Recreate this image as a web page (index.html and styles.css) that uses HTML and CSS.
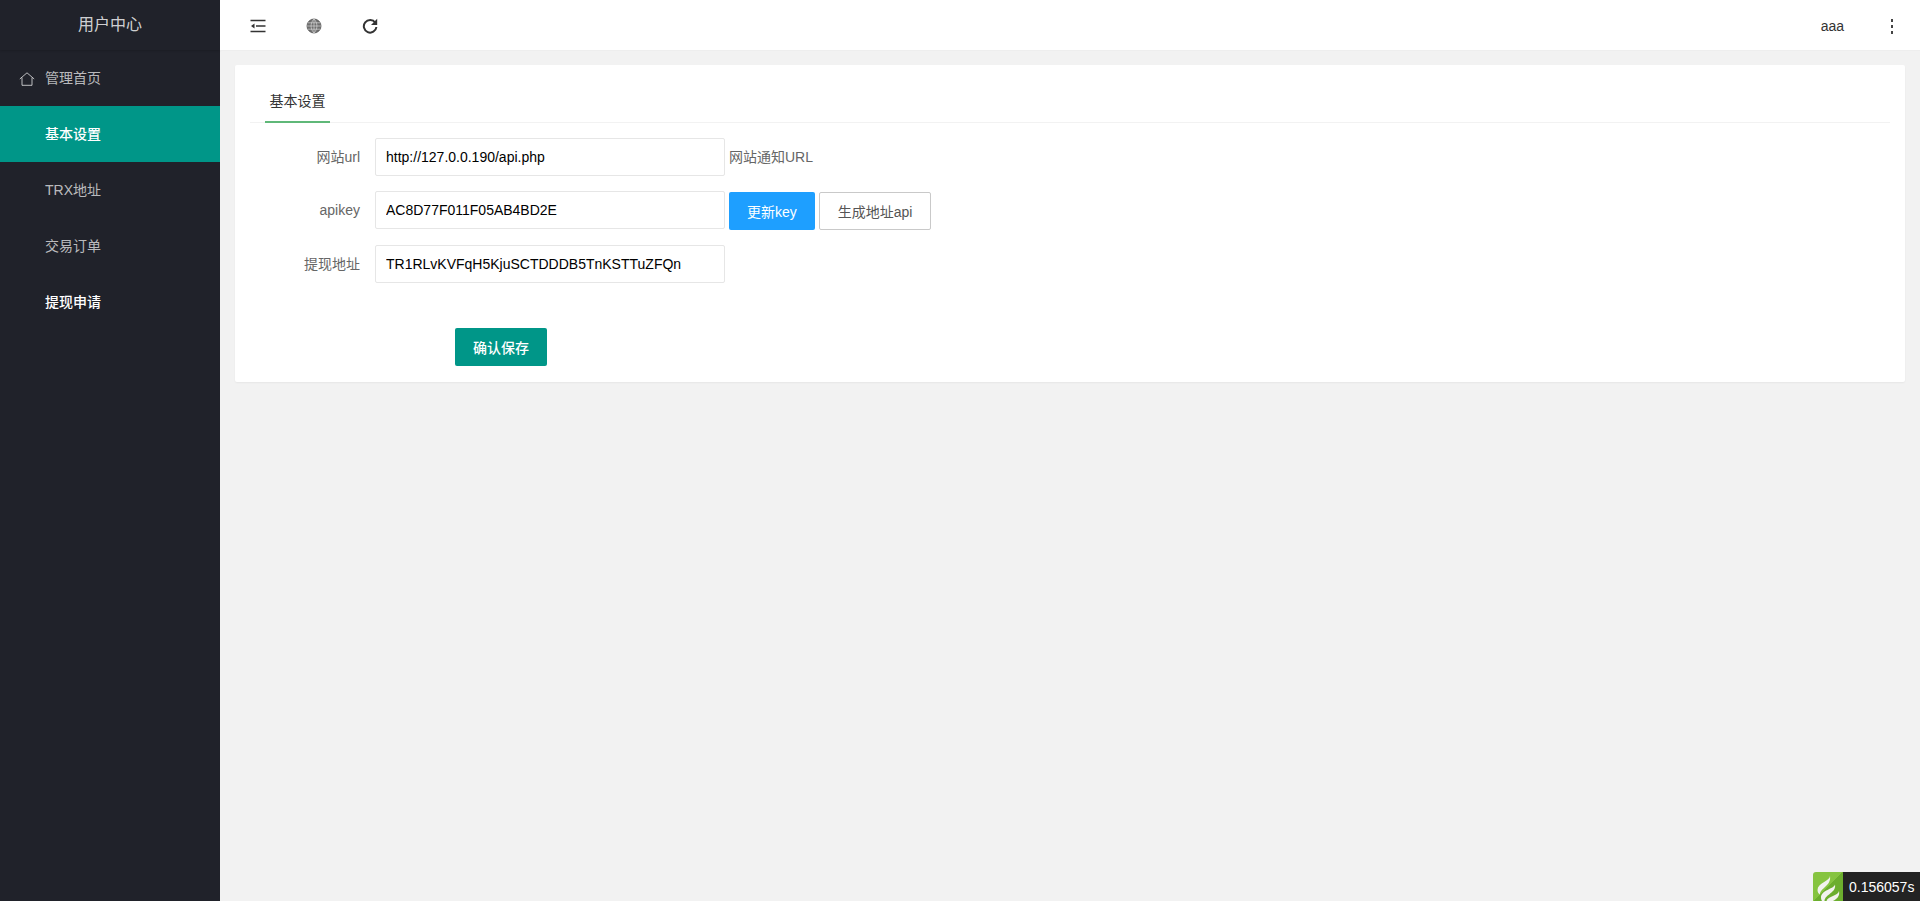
FILE: index.html
```html
<!DOCTYPE html>
<html lang="zh-CN">
<head>
<meta charset="utf-8">
<title>用户中心</title>
<link rel="stylesheet" href="styles.css">
</head>
<body>
<div class="app">
  <aside class="side">
    <div class="logo">用户中心</div>
    <nav class="menu">
      <a class="item"><svg class="home" viewBox="0 0 16 14" width="16" height="14"><path d="M.8 7 8 .8 15.2 7M3 5.6v7.7h10V5.600" fill="none" stroke="currentColor" stroke-width="1"/></svg>管理首页</a>
      <a class="item active">基本设置</a>
      <a class="item">TRX地址</a>
      <a class="item">交易订单</a>
      <a class="item hover">提现申请</a>
    </nav>
  </aside>
  <div class="main">
    <header class="top">
      <div class="tools">
        <span class="tool"><svg viewBox="0 0 16 16" width="16" height="16"><path d="M.5 2.500h15M6 8h9.500M.5 13.500h15" stroke="#333" stroke-width="1.500" fill="none"/><path d="M1 8 4.500 5.600v4.800z" fill="#333"/></svg></span>
        <span class="tool"><svg viewBox="0 0 16 16" width="16" height="16"><circle cx="8" cy="8" r="7" fill="#6e6e6e" stroke="#555" stroke-width=".8"/><path d="M1 8h14M2 4.800h12M2 11.200h12M8 1v14M8 1c-3.900 3.900-3.900 10.100 0 14M8 1c3.900 3.900 3.900 10.100 0 14" fill="none" stroke="#e4e4e4" stroke-width=".6"/></svg></span>
        <span class="tool"><svg viewBox="0 0 16 16" width="16" height="16"><path d="M13.300 4.700A6.300 6.300 0 1 0 14.400 9" fill="none" stroke="#333" stroke-width="2"/><path d="M15.200 .8v6.200H9z" fill="#333"/></svg></span>
      </div>
      <div class="user">
        <span class="name">aaa</span>
        <span class="dots"><i></i><i></i><i></i></span>
      </div>
    </header>
    <main class="content">
      <section class="card">
        <div class="tabs"><span class="tab">基本设置</span></div>
        <form class="form">
          <div class="row">
            <label class="label">网站url</label>
            <input class="input" type="text" value="http://127.0.0.190/api.php">
            <span class="help">网站通知URL</span>
          </div>
          <div class="row">
            <label class="label">apikey</label>
            <input class="input" type="text" value="AC8D77F011F05AB4BD2E">
            <button class="btn blue" type="button">更新key</button>
            <button class="btn plain" type="button">生成地址api</button>
          </div>
          <div class="row">
            <label class="label">提现地址</label>
            <input class="input" type="text" value="TR1RLvKVFqH5KjuSCTDDDB5TnKSTTuZFQn">
          </div>
          <div class="actions"><button class="btn green" type="button">确认保存</button></div>
        </form>
      </section>
    </main>
  </div>
</div>
<div class="trace">
  <span class="trace-logo"><svg viewBox="0 0 30 29" width="30" height="29"><path d="M17 4C17 9 4.500 11 4.500 18c0 2 1 3.500 2.500 4.500C7 16 18.500 14 17 4z" fill="#f2f2ee"/><path d="M22 12.500C21 17 8 18 8 25.500c0 1.500.5 2.500 1 3.500h2.500C12 22 23.500 21 22 12.500z" fill="#f2f2ee"/><path d="M26 19c-1 5-11 5-12.500 10H20c4-2 7-5 6-10z" fill="#f2f2ee"/></svg></span>
  <span class="trace-time">0.156057s</span>
</div>
</body>
</html>
```
FILE: styles.css
```css
* { box-sizing: border-box; }
html, body { margin: 0; height: 100%; overflow: hidden; }
body {
  font: 14px/24px "Liberation Sans", "Noto Sans CJK SC", sans-serif;
  color: #333;
  background: #f2f2f2;
}
.app { display: flex; height: 100vh; }

.side { width: 220px; flex: none; background: #20222a; }
.logo {
  height: 50px;
  line-height: 50px;
  text-align: center;
  font-size: 16px;
  color: rgba(255,255,255,.8);
  box-shadow: 0 1px 2px rgba(0,0,0,.15);
}
.menu { display: flex; flex-direction: column; }
.item {
  position: relative;
  height: 56px;
  line-height: 56px;
  padding-left: 45px;
  color: rgba(255,255,255,.7);
}
.home { position: absolute; left: 19px; top: 22px; color: rgba(255,255,255,.7); }
.item.active { background: #009688; color: #fff; font-weight: 500; }
.item.hover { color: #fff; font-weight: 500; }

.main { flex: 1; display: flex; flex-direction: column; min-width: 0; }
.top {
  height: 51px;
  flex: none;
  background: #fff;
  border-bottom: 1px solid #eee;
  display: flex;
  justify-content: space-between;
  align-items: center;
  padding: 0 26px 0 10px;
}
.tools { display: flex; padding-top: 2px; }
.tool { display: flex; width: 56px; justify-content: center; }
.user { display: flex; align-items: center; padding-top: 2px; }
.name { color: #333; margin-right: 47px; }
.dots { display: flex; flex-direction: column; gap: 3px; margin-right: 1px; }
.dots i { display: block; width: 2px; height: 3px; background: #444; }

.content { padding: 14px 15px; }
.card {
  background: #fff;
  border-radius: 2px;
  box-shadow: 0 1px 2px rgba(0,0,0,.05);
  padding: 16px 15px 16px;
}
.tabs { height: 42px; border-bottom: 1px solid #f2f2f2; padding-left: 15px; }
.tab {
  display: inline-block;
  position: relative;
  height: 42px;
  line-height: 40px;
  width: 65px;
  text-align: center;
  color: #333;
}
.tab::after {
  content: "";
  position: absolute;
  left: 0;
  right: 0;
  bottom: 0;
  height: 2px;
  background: #5fb878;
}
.form { margin-top: 15px; }
.row { display: flex; align-items: flex-start; margin-bottom: 15px; }
.label {
  width: 125px;
  padding-right: 15px;
  text-align: right;
  line-height: 38px;
  color: #666;
}
.input {
  width: 350px;
  height: 38px;
  padding: 0 10px;
  border: 1px solid #e6e6e6;
  border-radius: 2px;
  background: #fff;
  color: #000;
  font: 14px "Liberation Sans", "Noto Sans CJK SC", sans-serif;
  outline: 0;
}
.help { margin-left: 4px; line-height: 38px; color: #666; }
.btn {
  height: 38px;
  padding: 0 18px;
  border: 0;
  border-radius: 2px;
  font: 14px "Liberation Sans", "Noto Sans CJK SC", sans-serif;
  color: #fff;
  margin-top: 1px;
}
.blue { background: #1e9fff; margin-left: 4px; }
.plain { background: #fff; color: #555; border: 1px solid #c9c9c9; margin-left: 4px; }
.actions { margin-top: 45px; padding-left: 205px; height: 38px; }
.green { background: #009688; font-weight: 500; margin-top: 0; }

.trace { position: fixed; right: 0; bottom: 0; display: flex; height: 29px; }
.trace-logo {
  width: 30px;
  height: 29px;
  border-top-left-radius: 3px;
  background: linear-gradient(135deg, #86c440 50%, #6cae2e 50%);
}
.trace-logo svg { display: block; }
.trace-time {
  width: 77px;
  background: #232323;
  color: #fff;
  line-height: 30px;
  padding-left: 6px;
}
```
